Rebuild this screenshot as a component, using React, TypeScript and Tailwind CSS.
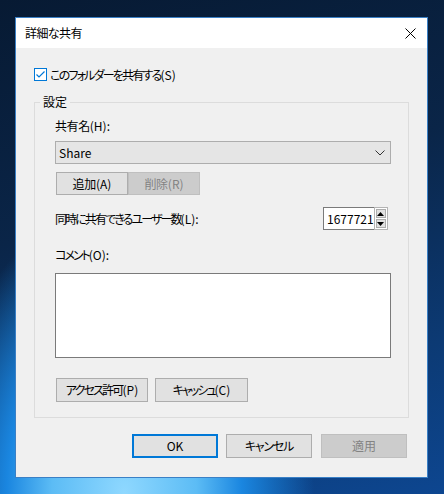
import React from "react";

const font =
  "font-['Noto_Sans_CJK_JP','Noto_Sans_CJK_SC',sans-serif] [font-feature-settings:'palt']";

// Japanese part gets squeezed (Yu Gothic UI kana are narrow), the mnemonic stays normal
function Label({ jp, key2, tracking }: { jp: string; key2: string; tracking: string }) {
  return (
    <span className="whitespace-nowrap">
      <span className={tracking}>{jp}</span>
      <span>{key2}</span>
    </span>
  );
}

function WinButton({
  children,
  width,
  disabled,
  primary,
  height = "h-[24px]",
}: {
  children: React.ReactNode;
  width: string;
  disabled?: boolean;
  primary?: boolean;
  height?: string;
}) {
  const base = "flex items-center justify-center text-[12px] leading-none";
  const tone = disabled
    ? "border border-[#bfbfbf] bg-[#cccccc] text-[#838383]"
    : primary
      ? "border-2 border-[#0078d7] bg-[#e1e1e1] text-black"
      : "border border-[#adadad] bg-[#e1e1e1] text-black";
  return <div className={`${base} ${tone} ${width} ${height}`}>{children}</div>;
}

function SpinBox() {
  return (
    <div className="mr-[3px] flex h-[23px] w-[65px]">
      <div className="flex flex-1 items-center border border-r-0 border-[#7a7a7a] bg-white pl-[3px] text-[12px]">
        1677721
      </div>
      <div className="flex w-[17px] flex-col gap-[1px] border border-[#b4b4b4] bg-white p-[1px]">
        <div className="flex flex-1 items-center justify-center border border-[#adadad] bg-[#e1e1e1]">
          <svg width="7" height="4" viewBox="0 0 7 4">
            <polygon points="0,4 7,4 3.5,0" fill="#000" />
          </svg>
        </div>
        <div className="flex flex-1 items-center justify-center border border-[#adadad] bg-[#e1e1e1]">
          <svg width="7" height="4" viewBox="0 0 7 4">
            <polygon points="0,0 7,0 3.5,4" fill="#000" />
          </svg>
        </div>
      </div>
    </div>
  );
}

export default function App() {
  return (
    <div
      className={`${font} h-[494px] w-[444px] overflow-hidden bg-[radial-gradient(ellipse_at_28%_100%,#8fd8ff_0%,#5cbcf5_16%,#1a86e0_26%,transparent_42%),linear-gradient(165deg,#071a33_0%,#0a2548_40%,#0c3a74_75%,#0d4690_100%)] pl-[15px] pt-[17px] text-black`}
    >
      <div className="flex h-[461px] w-[413px] flex-col border border-[#3a80c6] bg-[#f0f0f0]">
        {/* title bar */}
        <div className="flex h-[30px] items-center justify-between bg-white pl-[9px] pr-[10px]">
          <span className="text-[12px] tracking-[-0.6px]">詳細な共有</span>
          <svg width="11" height="11" viewBox="0 0 11 11" className="mr-[1px]">
            <path d="M0.5 0.5 L10.5 10.5 M10.5 0.5 L0.5 10.5" stroke="#000" strokeWidth="1" />
          </svg>
        </div>

        <div className="flex flex-col px-[18px]">
          {/* share checkbox */}
          <div className="mt-[20px] flex h-[13px] items-center gap-[3px]">
            <div className="flex h-[13px] w-[13px] items-center justify-center border border-[#0078d7] bg-white">
              <svg width="11" height="11" viewBox="0 0 11 11">
                <path d="M1.5 5.5 L4 8 L9.5 2.5" fill="none" stroke="#0078d7" strokeWidth="1.2" />
              </svg>
            </div>
            <span className="text-[12px] leading-[16px]">
              <Label jp="このフォルダーを共有する" key2="(S)" tracking="tracking-[-1.8px]" />
            </span>
          </div>

          {/* settings group */}
          <fieldset className="mt-[13px] border border-[#dcdcdc] pb-[15px] pl-[20px] pr-[17px] pt-[8px]">
            <legend className="-ml-[15px] px-[3px] text-[12px] leading-[16px]">設定</legend>

            <div className="text-[12px] leading-[16px]">
              <Label jp="共有名" key2="(H):" tracking="tracking-[-0.4px]" />
            </div>

            <div className="mt-[7px] flex h-[23px] items-center justify-between border border-[#adadad] bg-[#e5e5e5] pl-[3px] pr-[5px] text-[12px]">
              <span>Share</span>
              <svg width="10" height="6" viewBox="0 0 10 6">
                <path d="M0.5 0.5 L5 5 L9.5 0.5" fill="none" stroke="#333" strokeWidth="1" />
              </svg>
            </div>

            <div className="ml-[1px] mt-[8px] flex">
              <WinButton width="w-[72px]" height="h-[23px]">
                <Label jp="追加" key2="(A)" tracking="tracking-[-0.3px]" />
              </WinButton>
              <WinButton width="w-[72px]" height="h-[23px]" disabled>
                <Label jp="削除" key2="(R)" tracking="tracking-[-0.3px]" />
              </WinButton>
            </div>

            <div className="mt-[12px] flex items-center justify-between">
              <span className="text-[12px] leading-[16px]">
                <Label jp="同時に共有できるユーザー数" key2="(L):" tracking="tracking-[-1.9px]" />
              </span>
              <SpinBox />
            </div>

            <div className="mt-[17px] text-[12px] leading-[16px]">
              <Label jp="コメント" key2="(O):" tracking="tracking-[-2px]" />
            </div>

            <div className="mt-[10px] h-[85px] w-[336px] border border-[#7a7a7a] bg-white" />

            <div className="ml-[1px] mt-[20px] flex gap-[7px]">
              <WinButton width="w-[92px]">
                <Label jp="アクセス許可" key2="(P)" tracking="tracking-[-1.8px]" />
              </WinButton>
              <WinButton width="w-[93px]">
                <Label jp="キャッシュ" key2="(C)" tracking="tracking-[-2px]" />
              </WinButton>
            </div>
          </fieldset>

          {/* dialog buttons */}
          <div className="mr-[2px] mt-[16px] flex justify-end">
            <WinButton width="w-[86px]" primary>
              OK
            </WinButton>
            <div className="w-[8px]" />
            <WinButton width="w-[86px]">
              <span className="tracking-[-1.2px]">キャンセル</span>
            </WinButton>
            <div className="w-[9px]" />
            <WinButton width="w-[86px]" disabled>
              適用
            </WinButton>
          </div>
        </div>
      </div>
    </div>
  );
}
